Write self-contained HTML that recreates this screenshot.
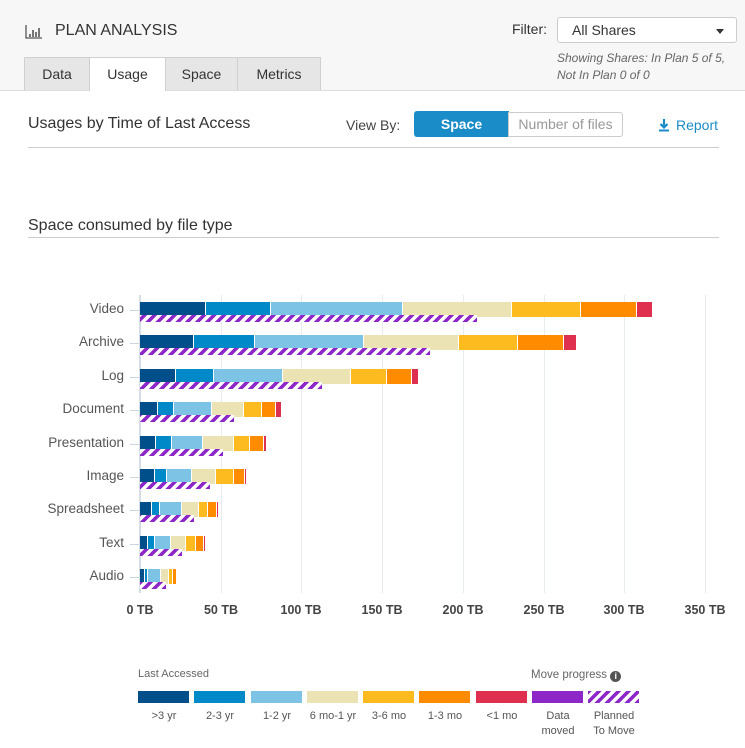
<!DOCTYPE html>
<html><head><meta charset="utf-8"><style>
body{margin:0;width:745px;height:748px;background:#fff;font-family:"Liberation Sans",sans-serif;position:relative;overflow:hidden;color:#333}
.a{position:absolute}
.hdr{left:0;top:0;width:745px;height:90px;background:#f7f7f7;border-bottom:1px solid #ddd}
.tab{top:57px;height:33px;background:#e6e6e6;border:1px solid #d0d0d0;border-bottom:none;box-sizing:border-box;font-size:14px;text-align:center;line-height:32px;color:#333}
.hatch{background:repeating-linear-gradient(-45deg,#8e27c8 0 3.5px,#fff 3.5px 7px)}
.gl{width:1px;background:#e9ecef;top:295px;height:298px}
.lab{font-size:13.5px;color:#555;text-align:right;width:100px;left:24px}
.ax{font-size:12.5px;font-weight:bold;color:#444;width:60px;text-align:center;top:603px}
.lg{font-size:11px;color:#555;text-align:center;width:56px;top:709px;line-height:15px}
</style></head><body>
<div class="a hdr"></div>
<svg class="a" style="left:25px;top:25px" width="18" height="14"><path d="M1 0v13h16" stroke="#555" fill="none" stroke-width="1.3"/><path d="M5 9v3M8 5v7M11 7v5M14 3v9" stroke="#555" stroke-width="1.6"/></svg>
<div class="a" style="left:55px;top:22px;font-size:16px;color:#333">PLAN ANALYSIS</div>
<div class="a" style="left:512px;top:21px;font-size:14px">Filter:</div>
<div class="a" style="left:557px;top:17px;width:180px;height:26px;background:#fff;border:1px solid #ccc;border-radius:3px;box-sizing:border-box;font-size:14px;line-height:24px;padding-left:14px">All Shares<span class="a" style="right:12px;top:11px;border:4px solid transparent;border-top:5px solid #333;border-bottom:0"></span></div>
<div class="a" style="left:557px;top:50px;font-size:12px;font-style:italic;color:#666;line-height:17px">Showing Shares: In Plan 5 of 5,<br>Not In Plan 0 of 0</div>
<div class="a tab" style="left:24px;width:66px">Data</div>
<div class="a tab" style="left:89px;width:77px;background:#fff;height:34px">Usage</div>
<div class="a tab" style="left:165px;width:73px">Space</div>
<div class="a tab" style="left:237px;width:84px">Metrics</div>
<div class="a" style="left:28px;top:115px;font-size:16px;color:#333">Usages by Time of Last Access</div>
<div class="a" style="left:346px;top:117px;font-size:14px;color:#444">View By:</div>
<div class="a" style="left:414px;top:111px;width:95px;height:26px;background:#1a8cc8;color:#fff;font-weight:bold;font-size:14px;text-align:center;line-height:26px;border-radius:3px 0 0 3px">Space</div>
<div class="a" style="left:508px;top:112px;width:115px;height:25px;border:1px solid #ccc;box-sizing:border-box;color:#999;font-size:14px;text-align:center;line-height:23px;border-radius:0 3px 3px 0">Number of files</div>
<svg class="a" style="left:659px;top:119px" width="10" height="13"><path d="M5 0v8M1.5 5l3.5 3.5 3.5-3.5" stroke="#1a8cc8" stroke-width="2.2" fill="none"/><path d="M0 11.5h10" stroke="#1a8cc8" stroke-width="2"/></svg>
<div class="a" style="left:676px;top:117px;font-size:14px;color:#1a8cc8">Report</div>
<div class="a" style="left:28px;top:147px;width:691px;height:1px;background:#ccc"></div>
<div class="a" style="left:28px;top:217px;font-size:16px;color:#333">Space consumed by file type</div>
<div class="a" style="left:28px;top:237px;width:691px;height:1px;background:#ccc"></div>
<div id="c"></div>
<div class="a" style="left:138px;top:668px;font-size:11px;color:#666">Last Accessed</div>
<div class="a" style="left:531px;top:669px;font-size:11.5px;color:#666">Move progress <span style="display:inline-block;width:11px;height:11px;border-radius:50%;background:#555;color:#fff;font-size:9px;text-align:center;line-height:11px;font-weight:bold;vertical-align:-1px">i</span></div>
<div id="l"></div>
<script>
var C=['#004e8a','#0089c8','#7dc3e6','#ebe3b4','#fdbb1f','#ff8c00','#e0304f'];
var h='';
for(var i=0;i<8;i++){var x=140+i*80.7;h+='<div class="a gl" style="left:'+Math.round(x)+'px"></div>';h+='<div class="a ax" style="left:'+(Math.round(x)-30)+'px">'+(i*50)+' TB</div>';}
h+='<div class="a" style="left:139px;top:295px;width:2px;height:298px;background:#d5dde6"></div>';
var R=[['Video',[140,205,270,402,511,580,636,652],477],['Archive',[140,193,254,363,458,517,563,576],430],['Log',[140,175,213,282,350,386,411,418],322],['Document',[140,157,173,211,243,261,275,281],234],['Presentation',[140,155,171,202,233,249,263,266],223],['Image',[140,154,166,191,215,233,244,246],210],['Spreadsheet',[140,151,159,181,198,207,216,218],194],['Text',[140,147,154,170,185,195,203,205],182],['Audio',[140,144,147,160,168,172,176,177],166]];
R.forEach(function(r,k){var y=Math.round(310+k*33.4);
h+='<div class="a lab" style="top:'+(y-9)+'px">'+r[0]+'</div><div class="a" style="left:130px;top:'+y+'px;width:9px;height:1px;background:#ccd6e0"></div>';
for(var j=0;j<7;j++){var a=r[1][j],b=r[1][j+1];h+='<div class="a" style="left:'+(a+(j?1:0))+'px;top:'+(y-8)+'px;width:'+(b-a-(j?1:0))+'px;height:15px;background:'+C[j]+'"></div>';}
h+='<div class="a hatch" style="left:140px;top:'+(y+5)+'px;width:'+(r[2]-140)+'px;height:7px"></div>';});
document.getElementById('c').innerHTML=h;
var L=['&gt;3 yr','2-3 yr','1-2 yr','6 mo-1 yr','3-6 mo','1-3 mo','&lt;1 mo','Data<br>moved','Planned<br>To Move'];
var g='';var X=[138,194,251,307,363,419,476,532,588];
X.forEach(function(x,i){var bg=i<7?'background:'+C[i]:(i==7?'background:#8e27c8':'');g+='<div class="a '+(i==8?'hatch':'')+'" style="left:'+x+'px;top:691px;width:51px;height:12px;'+bg+'"></div><div class="a lg" style="left:'+(x-2)+'px">'+L[i]+'</div>';});
document.getElementById('l').innerHTML=g;
</script>
</body></html>
